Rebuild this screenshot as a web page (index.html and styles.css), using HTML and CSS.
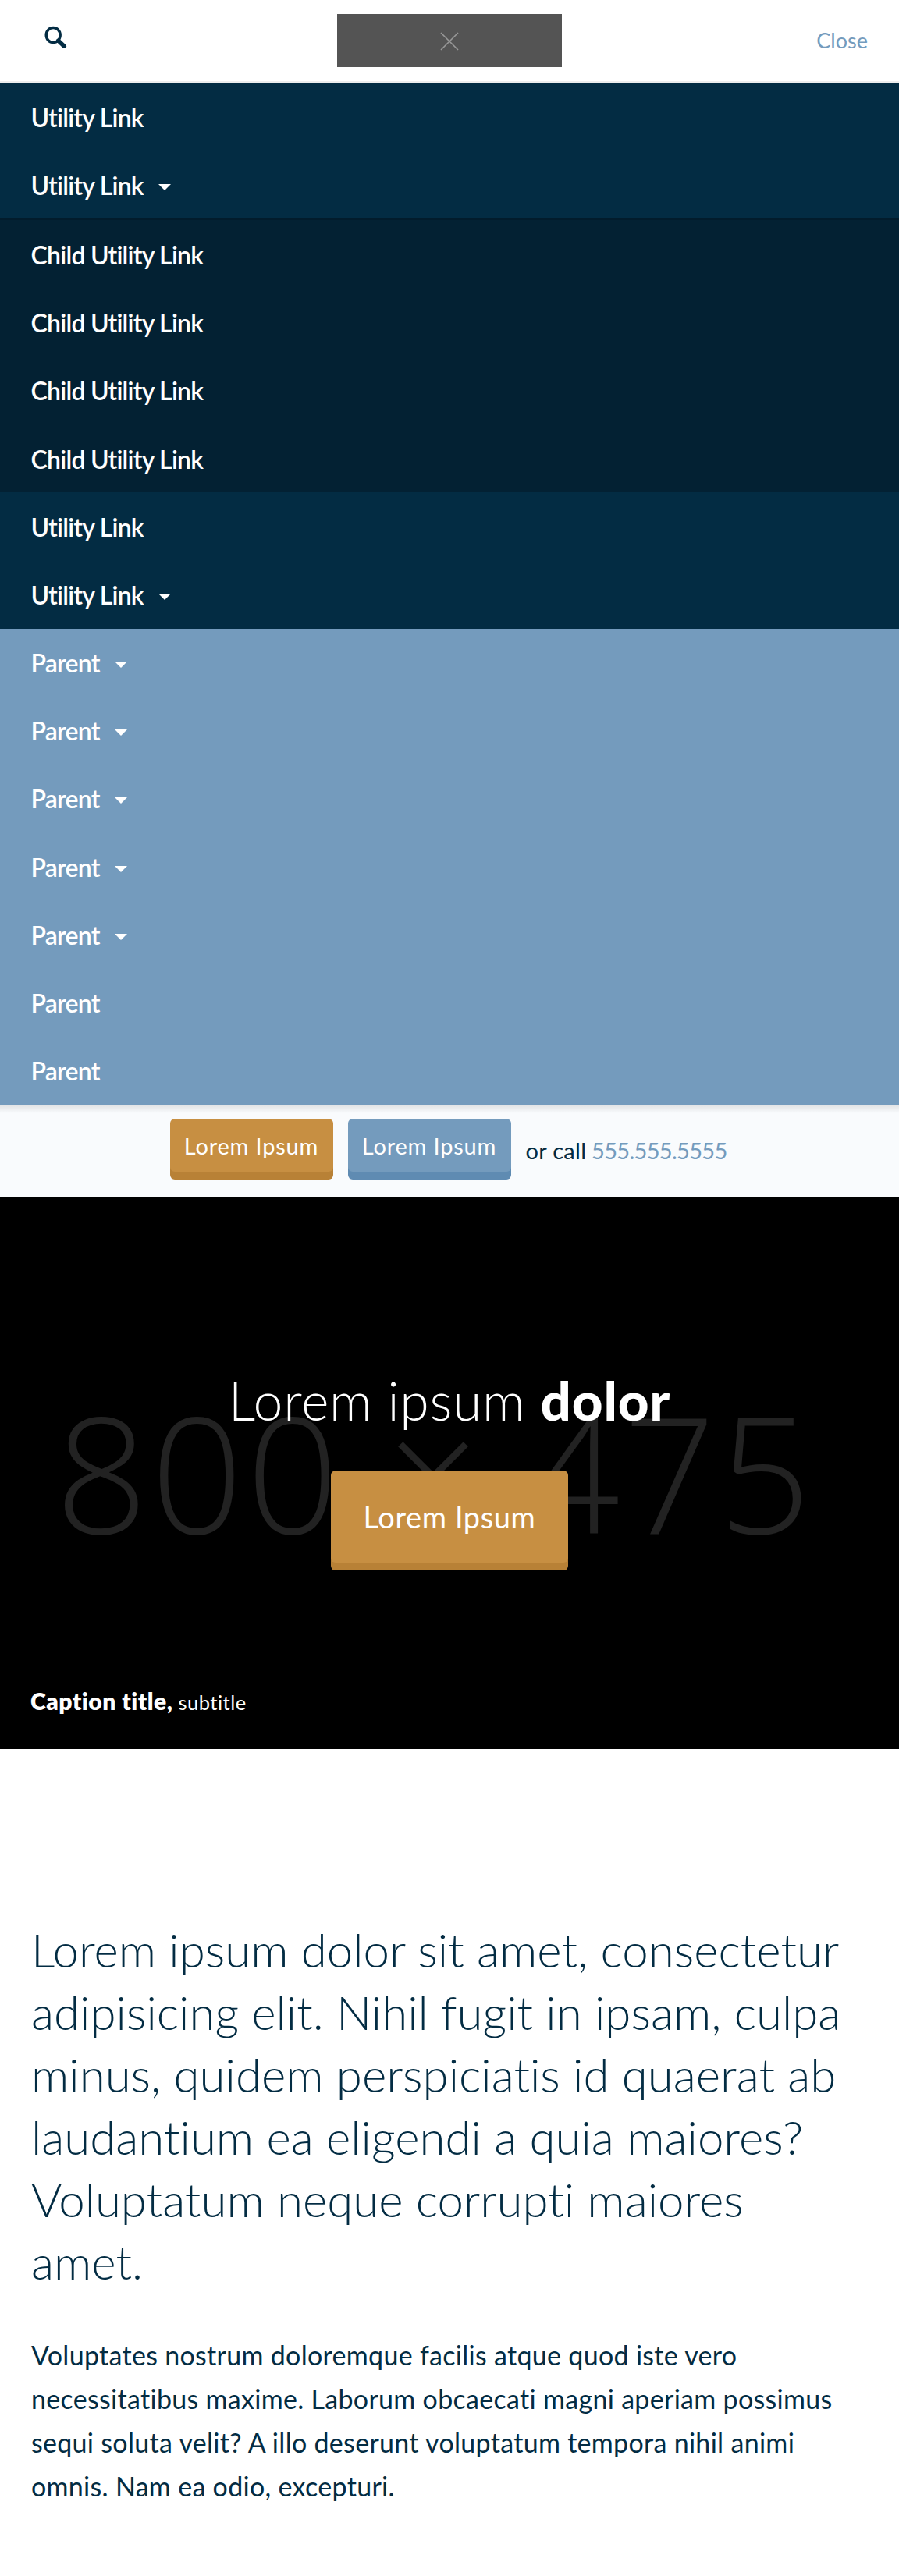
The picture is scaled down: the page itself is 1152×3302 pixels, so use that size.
FILE: index.html
```html
<!DOCTYPE html>
<html lang="en">
<head>
<meta charset="utf-8">
<title>Lorem Ipsum</title>
<link rel="stylesheet" href="styles.css">
</head>
<body>
<header class="header">
  <a class="search" href="#" aria-label="Search">
    <svg width="30" height="30" viewBox="0 0 30 30"><ellipse cx="11.2" cy="12" rx="9" ry="9.5" fill="none" stroke="#032c43" stroke-width="3.4"/><path d="M17.8 19.2L25.2 26.2" stroke="#032c43" stroke-width="5.4" stroke-linecap="round"/></svg>
  </a>
  <div class="logo">
    <svg width="24" height="24" viewBox="0 0 24 24"><path d="M1 1L23 23M23 1L1 23" stroke="#999" stroke-width="1.6"/></svg>
  </div>
  <a class="close" href="#">Close</a>
</header>
<nav>
  <ul class="menu utility">
    <li><a href="#">Utility Link</a></li>
    <li><a href="#">Utility Link<i class="caret"></i></a>
      <ul class="menu children">
        <li><a href="#">Child Utility Link</a></li>
        <li><a href="#">Child Utility Link</a></li>
        <li><a href="#">Child Utility Link</a></li>
        <li><a href="#">Child Utility Link</a></li>
      </ul>
    </li>
    <li><a href="#">Utility Link</a></li>
    <li><a href="#">Utility Link<i class="caret"></i></a></li>
  </ul>
  <ul class="menu primary">
    <li><a href="#">Parent<i class="caret"></i></a></li>
    <li><a href="#">Parent<i class="caret"></i></a></li>
    <li><a href="#">Parent<i class="caret"></i></a></li>
    <li><a href="#">Parent<i class="caret"></i></a></li>
    <li><a href="#">Parent<i class="caret"></i></a></li>
    <li><a href="#">Parent</a></li>
    <li><a href="#">Parent</a></li>
  </ul>
</nav>
<section class="cta">
  <a class="button gold" href="#">Lorem Ipsum</a>
  <a class="button blue" href="#">Lorem Ipsum</a>
  <p class="call"><span class="or">or call</span> <a href="#">555.555.5555</a></p>
</section>
<section class="hero">
  <div class="placeholder" aria-hidden="true">800 × 475</div>
  <h1>Lorem ipsum <strong>dolor</strong></h1>
  <a class="button gold large" href="#">Lorem Ipsum</a>
  <p class="caption"><strong>Caption title,</strong> <span>subtitle</span></p>
</section>
<main class="content">
  <p class="intro">Lorem ipsum dolor sit amet, consectetur<br>adipisicing elit. Nihil fugit in ipsam, culpa<br>minus, quidem perspiciatis id quaerat ab<br>laudantium ea eligendi a quia maiores?<br>Voluptatum neque corrupti maiores<br>amet.</p>
  <p class="body">Voluptates nostrum doloremque facilis atque quod iste vero<br>necessitatibus maxime. Laborum obcaecati magni aperiam possimus<br>sequi soluta velit? A illo deserunt voluptatum tempora nihil animi<br>omnis. Nam ea odio, excepturi.</p>
</main>
</body>
</html>
```
FILE: styles.css
```css
* { box-sizing: border-box; }
body, h1, p, ul { margin: 0; padding: 0; }
body {
  background: #fff;
  color: #032c43;
  font-family: Lato, "Open Sans", sans-serif;
  font-variant-ligatures: none;
}
a { color: inherit; text-decoration: none; }

.header {
  display: grid;
  grid-template-columns: 1fr 288px 1fr;
  align-items: center;
  height: 106px;
  padding: 0 40px;
  border-bottom: 2px solid #eee;
}
.search { padding: 0 0 8px 17px; }
.search svg { display: block; }
.logo {
  display: flex;
  align-items: center;
  justify-content: center;
  height: 68px;
  background: #545454;
}
.logo svg { margin-top: 2px; }
.close {
  justify-self: end;
  color: #749bbd;
  font-size: 27px;
  line-height: 104px;
}

.menu {
  list-style: none;
  color: #fff;
  font-size: 32px;
  font-weight: 600;
  letter-spacing: -.75px;
  line-height: 84px;
}
.menu a { display: flex; align-items: center; height: 87.2px; padding: 2px 0 0 39.5px; }
.utility { background: #032c43; }
.children { background: #032133; border-top: 2px solid #021c2c; }
.primary { background: #749bbd; }
.caret {
  margin: 4px 0 0 19px;
  border: 8px solid transparent;
  border-top-color: #fff;
  border-bottom: 0;
}

.cta {
  display: flex;
  align-items: flex-start;
  justify-content: center;
  height: 118px;
  padding: 18px 2px 0 0;
  background: linear-gradient(rgba(0, 0, 0, .1), rgba(0, 0, 0, 0)) 0 0 / 100% 11px no-repeat #f9fbfd;
}
.button {
  width: 209px;
  height: 68px;
  margin-right: 19px;
  border-radius: 6px;
  color: #fff;
  font-size: 29px;
  letter-spacing: .8px;
  line-height: 69px;
  text-align: center;
}
/* The spread of the lower edge fills in behind the rounded corners of the face. */
.gold { background: #c78f42; box-shadow: 0 5px #b88136, 0 10px #b88136; }
.blue { background: #749bbd; box-shadow: 0 5px #5f8bb2, 0 10px #5f8bb2; }
.call { width: 259px; font-size: 29px; line-height: 82px; letter-spacing: -.7px; white-space: nowrap; }
.call .or { letter-spacing: .3px; }
.call a { color: #749bbd; }

.hero {
  position: relative;
  display: flex;
  flex-direction: column;
  align-items: center;
  height: 708px;
  padding-top: 220px;
  background: #000;
  color: #fff;
}
.placeholder {
  position: absolute;
  inset: 0 0 0 71px;
  color: #222;
  font: 300 207px/704px "Open Sans", sans-serif;
  letter-spacing: 4.2px;
  white-space: nowrap;
}
.hero h1 {
  position: relative;
  font-size: 68px;
  font-weight: 300;
  letter-spacing: .65px;
  line-height: 81px;
  white-space: nowrap;
}
.hero h1 strong { font-size: 69px; font-weight: 900; letter-spacing: .8px; line-height: 1; }
.large {
  position: relative;
  width: 304px;
  height: 118px;
  margin: 50px 0 0;
  font-size: 38px;
  letter-spacing: .6px;
  line-height: 119px;
}
.caption {
  align-self: flex-start;
  margin: 142px 0 0 39px;
  font-size: 25.5px;
  letter-spacing: .5px;
  line-height: 70px;
}
.caption strong { font-size: 30px; font-weight: 800; }

.content { height: 1060px; padding: 217px 40px 0; }
.intro { font-size: 60px; font-weight: 300; line-height: 80px; white-space: nowrap; }
.body { margin-top: 52px; font-size: 34px; letter-spacing: .3px; line-height: 56px; white-space: nowrap; }
```
